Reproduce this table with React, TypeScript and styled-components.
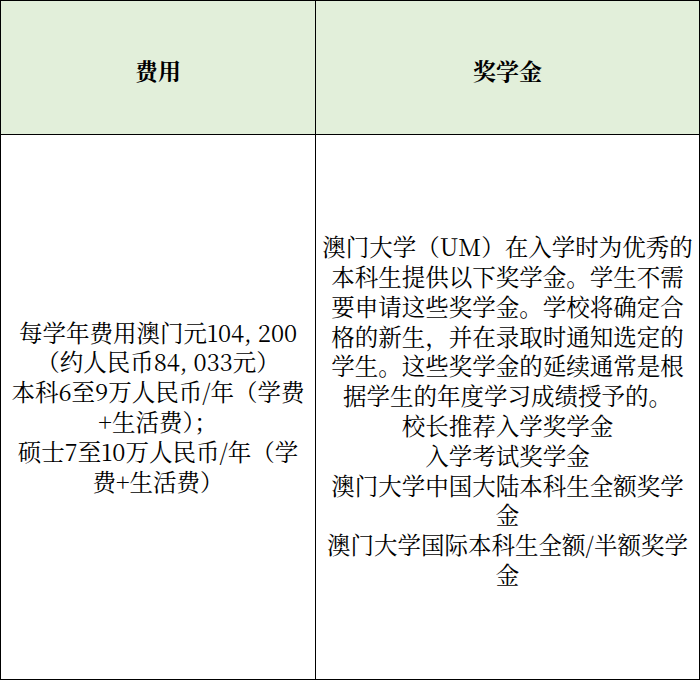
import React from "react";
import styled, { createGlobalStyle } from "styled-components";

const GlobalStyle = createGlobalStyle`
  html, body {
    margin: 0;
    padding: 0;
    background: #ffffff;
  }
  body {
    font-family: "Noto Serif CJK SC", "Noto Sans CJK SC", "Liberation Serif", serif;
    color: #000000;
  }
`;

const Table = styled.div`
  display: grid;
  grid-template-columns: 315px 384px;
  grid-template-rows: 134px 545px;
  width: 700px;
  height: 680px;
  box-sizing: border-box;
  border-left: 1px solid #000;
  border-top: 1px solid #000;
`;

const Cell = styled.div<{ $head?: boolean; $shift?: number }>`
  box-sizing: border-box;
  border-right: 1px solid #000;
  border-bottom: 1px solid #000;
  background: ${(p) => (p.$head ? "#e2efda" : "#ffffff")};
  display: flex;
  flex-direction: column;
  align-items: center;
  justify-content: center;
  text-align: center;
  padding-top: ${(p) => (p.$shift ? `${p.$shift}px` : "0")};
`;

const HeadText = styled.div`
  font-family: "Noto Serif CJK SC", "Noto Sans CJK SC", serif;
  font-size: 23px;
  font-weight: 700;
  line-height: 30px;
  margin-top: 6px;
`;

const Line = styled.span`
  display: block;
  white-space: nowrap;
  font-size: 23.5px;
  line-height: 29.8px;
  font-weight: 400;
`;

const leftLines = [
  "每学年费用澳门元104, 200",
  "（约人民币84, 033元）",
  "本科6至9万人民币/年（学费",
  "+生活费）；",
  "硕士7至10万人民币/年（学",
  "费+生活费）",
];

const rightLines = [
  "澳门大学（UM）在入学时为优秀的",
  "本科生提供以下奖学金。学生不需",
  "要申请这些奖学金。学校将确定合",
  "格的新生，并在录取时通知选定的",
  "学生。这些奖学金的延续通常是根",
  "据学生的年度学习成绩授予的。",
  "校长推荐入学奖学金",
  "入学考试奖学金",
  "澳门大学中国大陆本科生全额奖学",
  "金",
  "澳门大学国际本科生全额/半额奖学",
  "金",
];

export default function App() {
  return (
    <>
      <GlobalStyle />
      <Table>
        <Cell $head>
          <HeadText>费用</HeadText>
        </Cell>
        <Cell $head>
          <HeadText>奖学金</HeadText>
        </Cell>
        <Cell>
          {leftLines.map((l, i) => (
            <Line key={i}>{l}</Line>
          ))}
        </Cell>
        <Cell $shift={8}>
          {rightLines.map((l, i) => (
            <Line key={i}>{l}</Line>
          ))}
        </Cell>
      </Table>
    </>
  );
}
